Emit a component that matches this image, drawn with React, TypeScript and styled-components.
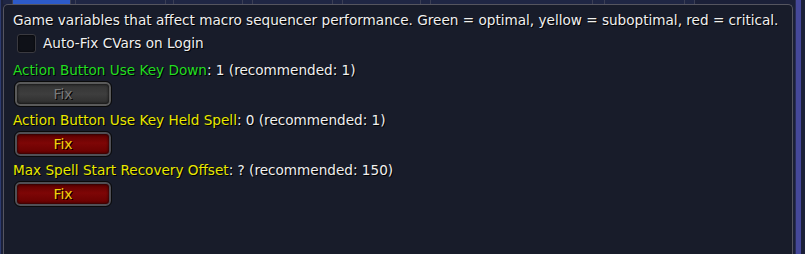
import React from 'react';
import styled, { createGlobalStyle } from 'styled-components';

const GlobalStyle = createGlobalStyle`
  html, body {
    margin: 0;
    padding: 0;
    background: #1a1f35;
  }
  body {
    width: 805px;
    height: 254px;
    overflow: hidden;
    font-family: "DejaVu Sans", Verdana, sans-serif;
  }
`;

const Frame = styled.div`
  display: flex;
  width: 805px;
  height: 254px;
  background: #1b2038;
  box-sizing: border-box;
  border-left: 1px solid #2c3a6e;
`;

const Main = styled.div`
  display: flex;
  flex-direction: column;
  width: 792px;
  padding-left: 2px;
  box-sizing: border-box;
`;

const TabStrip = styled.div`
  display: flex;
  height: 4px;
`;

const TabStub = styled.div<{ $w: number; $active?: boolean }>`
  width: ${(p) => p.$w}px;
  height: 4px;
  background: ${(p) => (p.$active ? '#2d5bc9' : '#1f2644')};
  border-right: 1px solid #3b3f55;
  box-sizing: border-box;
`;

const Panel = styled.div`
  flex: 1;
  background: #181c2a;
  border: 1px solid #55555f;
  border-bottom: none;
  border-radius: 5px 5px 0 0;
  padding: 6px 0 0 9px;
  display: flex;
  flex-direction: column;
  color: #f0f0f0;
  font-size: 13.6px;
  text-shadow: 1px 1px 0 #000;
`;

const Intro = styled.div`
  line-height: 18px;
  white-space: nowrap;
`;

const CheckRow = styled.label`
  display: flex;
  align-items: center;
  gap: 7px;
  margin: 5px 0 4px 4px;
  height: 18px;
`;

const Box = styled.span`
  width: 17px;
  height: 17px;
  border: 1px solid #3a3a40;
  border-radius: 3px;
  background: #0f1118;
  box-shadow: inset 0 0 2px #000;
`;

const CVarLabel = styled.div`
  margin-top: 5px;
  line-height: 18px;
  white-space: nowrap;
`;

const Name = styled.span<{ $tone: 'green' | 'yellow' }>`
  color: ${(p) => (p.$tone === 'green' ? '#22dd22' : '#e8e800')};
`;

const FixButton = styled.button<{ $disabled?: boolean }>`
  margin: 3px 0 0 2px;
  width: 96px;
  height: 24px;
  border-radius: 5px;
  border: 2px solid ${(p) => (p.$disabled ? '#5a5a5a' : '#4f4f55')};
  outline: 1px solid #0a0a0a;
  background: ${(p) =>
    p.$disabled
      ? 'linear-gradient(#333 0%, #3e3e3e 50%, #2e2e2e 100%)'
      : 'linear-gradient(#5e0000 0%, #7e0606 45%, #660000 100%)'};
  box-shadow: inset 0 0 3px #000;
  color: ${(p) => (p.$disabled ? '#7a7a7a' : '#f2d20a')};
  font-family: "DejaVu Sans", Verdana, sans-serif;
  font-size: 14px;
  font-weight: normal;
  text-shadow: 1px 1px 0 #000;
  padding: 0;
  cursor: pointer;
`;

const RightRail = styled.div`
  flex: 1;
  display: flex;
  justify-content: flex-end;
  padding-right: 4px;
`;

const RailStripe = styled.div`
  width: 5px;
  height: 100%;
  background: #45489a;
  border-left: 1px solid #2a2d55;
`;

const rows = [
  { name: 'Action Button Use Key Down', value: '1', rec: '1', tone: 'green' as const, ok: true },
  { name: 'Action Button Use Key Held Spell', value: '0', rec: '1', tone: 'yellow' as const, ok: false },
  { name: 'Max Spell Start Recovery Offset', value: '?', rec: '150', tone: 'yellow' as const, ok: false },
];

const App: React.FC = () => {
  return (
    <>
      <GlobalStyle />
      <Frame>
        <Main>
          <TabStrip>
            <TabStub $w={10} />
            <TabStub $w={58} $active />
            <TabStub $w={5} />
            <TabStub $w={90} />
            <TabStub $w={8} />
            <TabStub $w={69} />
            <TabStub $w={10} />
            <TabStub $w={80} />
            <TabStub $w={10} />
            <TabStub $w={78} />
            <TabStub $w={10} />
            <TabStub $w={162} />
            <TabStub $w={12} />
            <TabStub $w={80} />
            <TabStub $w={10} />
          </TabStrip>
          <Panel>
            <Intro>
              Game variables that affect macro sequencer performance. Green = optimal, yellow = suboptimal, red = critical.
            </Intro>
            <CheckRow>
              <Box />
              Auto-Fix CVars on Login
            </CheckRow>
            {rows.map((r) => (
              <React.Fragment key={r.name}>
                <CVarLabel>
                  <Name $tone={r.tone}>{r.name}</Name>: {r.value} (recommended: {r.rec})
                </CVarLabel>
                <FixButton $disabled={r.ok} disabled={r.ok}>
                  Fix
                </FixButton>
              </React.Fragment>
            ))}
          </Panel>
        </Main>
        <RightRail>
          <RailStripe />
        </RightRail>
      </Frame>
    </>
  );
};

export default App;
